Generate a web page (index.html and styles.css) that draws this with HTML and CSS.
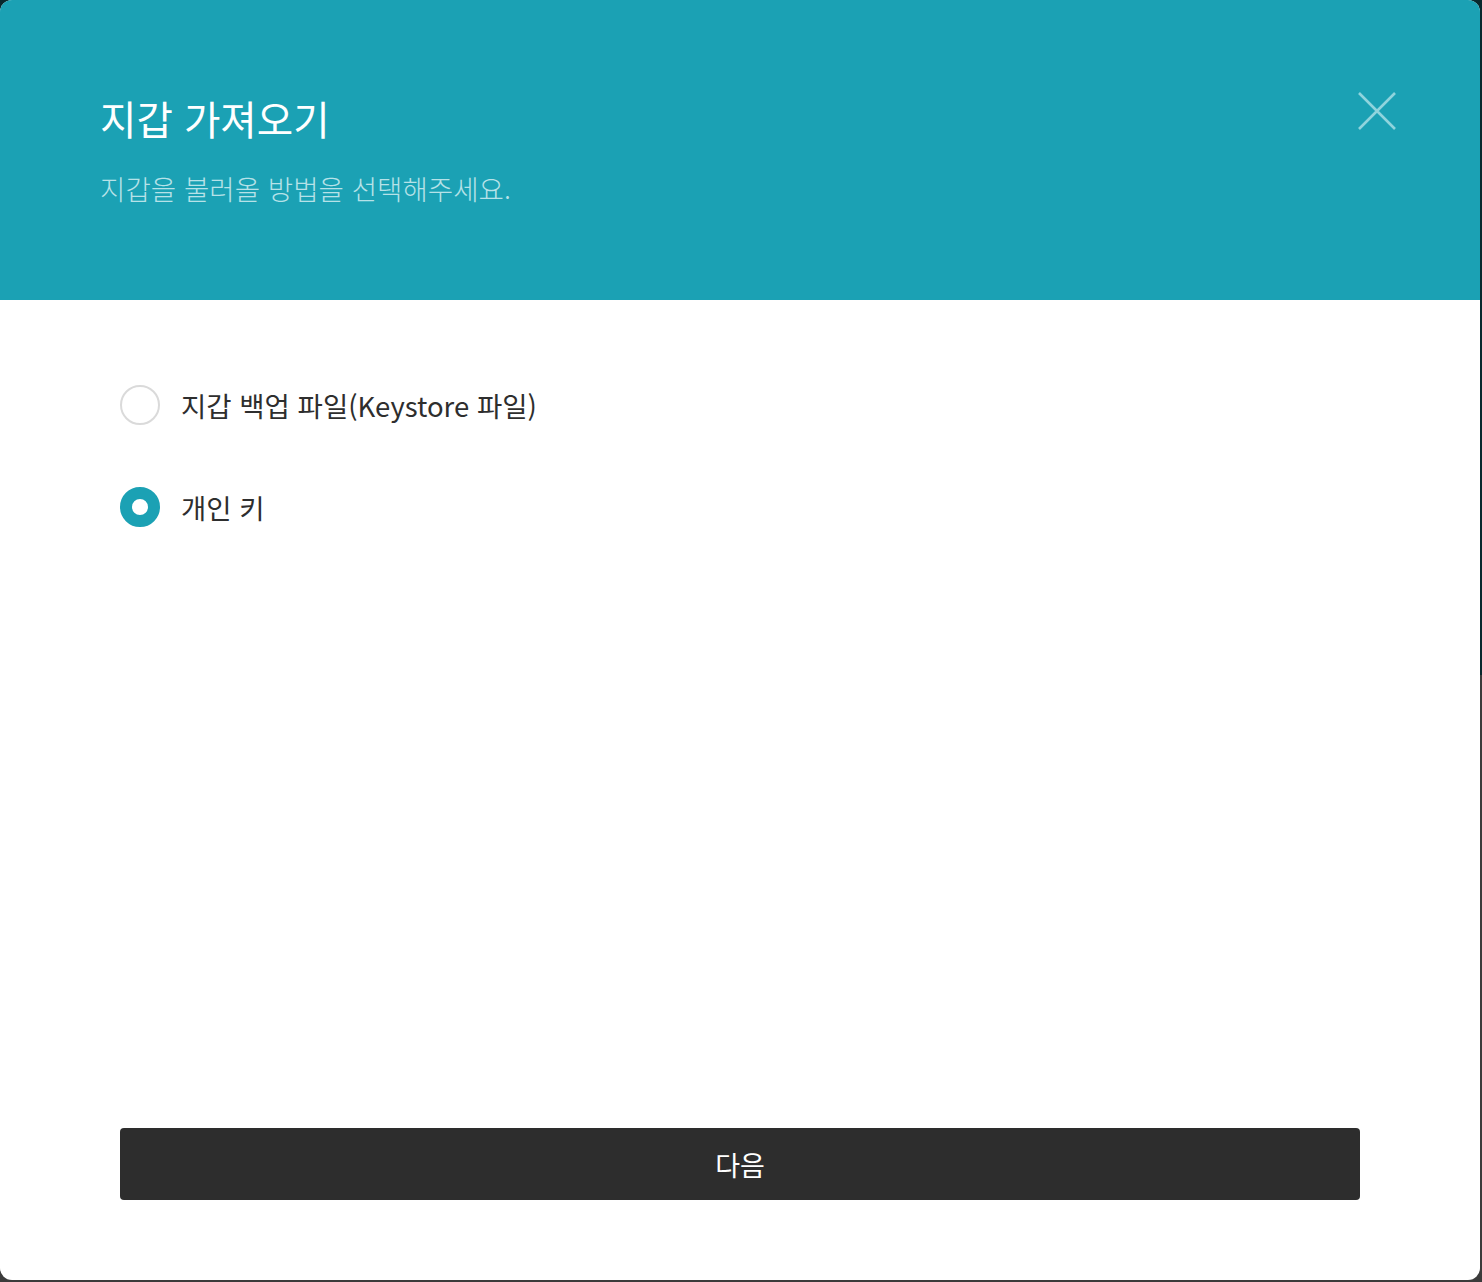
FILE: index.html
```html
<!DOCTYPE html>
<html lang="ko">
<head>
<meta charset="utf-8">
<title>지갑 가져오기</title>
<link rel="stylesheet" href="styles.css">
</head>
<body>
<div class="modal">
  <header class="modal-header">
    <div class="titles">
      <h1 class="title">지갑 가져오기</h1>
      <p class="subtitle">지갑을 불러올 방법을 선택해주세요.</p>
    </div>
    <button class="close" aria-label="닫기">
      <svg width="40" height="40" viewBox="0 0 40 40"><path d="M2 2 L38 38 M38 2 L2 38" stroke="currentColor" stroke-width="2.6" fill="none"/></svg>
    </button>
  </header>
  <main class="modal-body">
    <div class="options">
      <label class="option">
        <span class="radio"></span>
        <span class="label">지갑 백업 파일(Keystore 파일)</span>
      </label>
      <label class="option">
        <span class="radio checked"></span>
        <span class="label">개인 키</span>
      </label>
    </div>
    <button class="next">다음</button>
  </main>
</div>
</body>
</html>
```

FILE: styles.css
```css
html, body {
  margin: 0;
  padding: 0;
}
body {
  width: 1482px;
  height: 1282px;
  background: linear-gradient(to bottom, #08282d 0, #08282d 675px, #3b3b3b 675px, #3b3b3b 100%);
  font-family: "Noto Sans CJK KR", "Noto Sans", sans-serif;
  overflow: hidden;
}
.modal {
  width: 1480px;
  height: 1280px;
  border-radius: 12px;
  overflow: hidden;
  background: #ffffff;
  display: flex;
  flex-direction: column;
}
.modal-header {
  height: 300px;
  box-sizing: border-box;
  background: #1ba1b4;
  padding: 92px 83px 0 100px;
  display: flex;
  justify-content: space-between;
  align-items: flex-start;
}
.title {
  margin: 0;
  font-size: 39.6px;
  line-height: 52px;
  font-weight: 400;
  color: #ffffff;
}
.subtitle {
  margin: 25px 0 0;
  font-size: 27.6px;
  line-height: 38px;
  font-weight: 300;
  color: #b6e2e8;
}
.close {
  margin-top: -1px;
  padding: 0;
  border: 0;
  background: transparent;
  color: #8fd4dd;
  width: 40px;
  height: 40px;
  cursor: pointer;
}
.close svg { display: block; }
.modal-body {
  flex: 1;
  display: flex;
  flex-direction: column;
  padding: 85px 120px 80px;
}
.options {
  flex: 1;
  display: flex;
  flex-direction: column;
  gap: 62px;
}
.option {
  display: flex;
  align-items: center;
  gap: 21px;
  height: 40px;
}
.radio {
  width: 40px;
  height: 40px;
  box-sizing: border-box;
  border-radius: 50%;
  border: 2px solid #dadada;
  background: #fff;
  flex: none;
}
.radio.checked {
  border: 12px solid #1ba1b4;
}
.label {
  font-size: 27.5px;
  color: #2e2e2e;
  line-height: 40px;
}
.next {
  height: 72px;
  border: 0;
  border-radius: 4px;
  background: #2d2d2d;
  color: #ffffff;
  font-family: "Noto Sans CJK KR", "Noto Sans", sans-serif;
  font-size: 27px;
}
```
